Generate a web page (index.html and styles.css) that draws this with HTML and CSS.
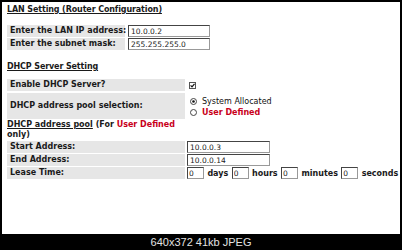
FILE: index.html
```html
<!DOCTYPE html>
<html lang="en">
<head>
    <meta charset="UTF-8">
    <title>LAN Setting</title>
    <link rel="stylesheet" href="styles.css">
</head>
<body>

    <div class="frame">
        <h2 class="section">LAN Setting (Router Configuration)</h2>
        <div class="form lan">
            <div class="label">Enter the LAN IP address:</div>
            <div class="value"><input type="text" class="field" value="10.0.0.2"></div>
            <div class="label">Enter the subnet mask:</div>
            <div class="value"><input type="text" class="field" value="255.255.255.0"></div>
        </div>

        <h2 class="section dhcp-title">DHCP Server Setting</h2>
        <div class="form dhcp">
            <div class="label">Enable DHCP Server?</div>
            <div class="value">
                <svg class="check" width="7" height="7" viewBox="0 0 7 7">
                    <rect x="0.5" y="0.5" width="6" height="6" fill="#fff" stroke="#555"/>
                    <path d="M1.6 3.4 L3 4.9 L5.5 1.8" fill="none" stroke="#111" stroke-width="1.2"/>
                </svg>
            </div>
            <div class="label tall">DHCP address pool selection:</div>
            <div class="value radios">
                <div class="radio">
                    <svg width="7" height="7" viewBox="0 0 7 7">
                        <circle cx="3.5" cy="3.5" r="3" fill="#fff" stroke="#444"/>
                        <circle cx="3.5" cy="3.5" r="1.3" fill="#111"/>
                    </svg>
                    <span class="plain">System Allocated</span>
                </div>
                <div class="radio">
                    <svg width="7" height="7" viewBox="0 0 7 7">
                        <circle cx="3.5" cy="3.5" r="3" fill="#fff" stroke="#444"/>
                    </svg>
                    <span class="red">User Defined</span>
                </div>
            </div>
        </div>

        <p class="note"><u>DHCP address pool</u> (For <span class="red">User Defined</span> only)</p>

        <div class="form dhcp pool">
            <div class="label">Start Address:</div>
            <div class="value"><input type="text" class="field long" value="10.0.0.3"></div>
            <div class="label">End Address:</div>
            <div class="value"><input type="text" class="field long" value="10.0.0.14"></div>
            <div class="label">Lease Time:</div>
            <div class="value lease">
                <input type="text" class="field tiny" value="0"><span>days</span>
                <input type="text" class="field tiny" value="0"><span>hours</span>
                <input type="text" class="field tiny" value="0"><span>minutes</span>
                <input type="text" class="field tiny" value="0"><span>seconds</span>
            </div>
        </div>
    </div>

    <div class="caption">640x372 41kb JPEG</div>

</body>
</html>
```

FILE: styles.css
```css
body {
    margin: 0;
    background: #000;
    font-family: "DejaVu Sans", Verdana, sans-serif;
}

.frame {
    margin: 2px 2px 0;
    height: 232px;
    box-sizing: border-box;
    padding: 3px 0 0 5px;
    background: #fff;
    color: #1a1a1a;
    font-size: 8px;
    font-weight: bold;
}

.section {
    margin: 0;
    font-size: 8px;
    line-height: 10px;
    letter-spacing: -0.12px;
    text-decoration: underline;
}

.dhcp-title {
    margin-top: 12px;
}

.form {
    display: grid;
    grid-auto-rows: 12px;
    row-gap: 1px;
}

.lan {
    margin-top: 10px;
    grid-template-columns: 118px 82px;
    column-gap: 3px;
}

.dhcp {
    margin-top: 7px;
    grid-template-columns: 178px auto;
    grid-template-rows: 12px 26px;
    column-gap: 2px;
    row-gap: 2px;
}

.dhcp.pool {
    margin-top: 1px;
    grid-template-rows: none;
    row-gap: 1px;
}

.label {
    background: #e6e6e6;
    padding-left: 3px;
    line-height: 12px;
    white-space: nowrap;
}

.label.tall {
    display: flex;
    align-items: center;
}

.value {
    display: flex;
    align-items: center;
}

.field {
    width: 82px;
    height: 12px;
    box-sizing: border-box;
    margin: 0;
    padding: 0 2px;
    border: 1px solid #444;
    border-right-color: #999;
    border-bottom-color: #999;
    font-family: "DejaVu Sans", Verdana, sans-serif;
    font-size: 7.5px;
    color: #222;
    background: #fff;
}

.field.long {
    width: 83px;
}

.field.tiny {
    width: 17px;
    padding: 0 1px;
}

.check {
    margin-left: 2px;
}

.radios {
    flex-direction: column;
    align-items: flex-start;
    justify-content: flex-start;
    padding-top: 3px;
}

.radio {
    display: flex;
    align-items: center;
    gap: 5px;
    margin-left: 3px;
    line-height: 11px;
}

.plain {
    font-weight: normal;
    color: #111;
}

.red {
    color: #c8001a;
}

.note {
    width: 178px;
    margin: 1px 0 0;
    line-height: 10px;
}

.lease {
    gap: 3.4px;
}

.caption {
    height: 16px;
    line-height: 16px;
    text-align: center;
    color: #e2e2e2;
    font-family: "Liberation Sans", Arial, sans-serif;
    font-size: 11px;
}
```
